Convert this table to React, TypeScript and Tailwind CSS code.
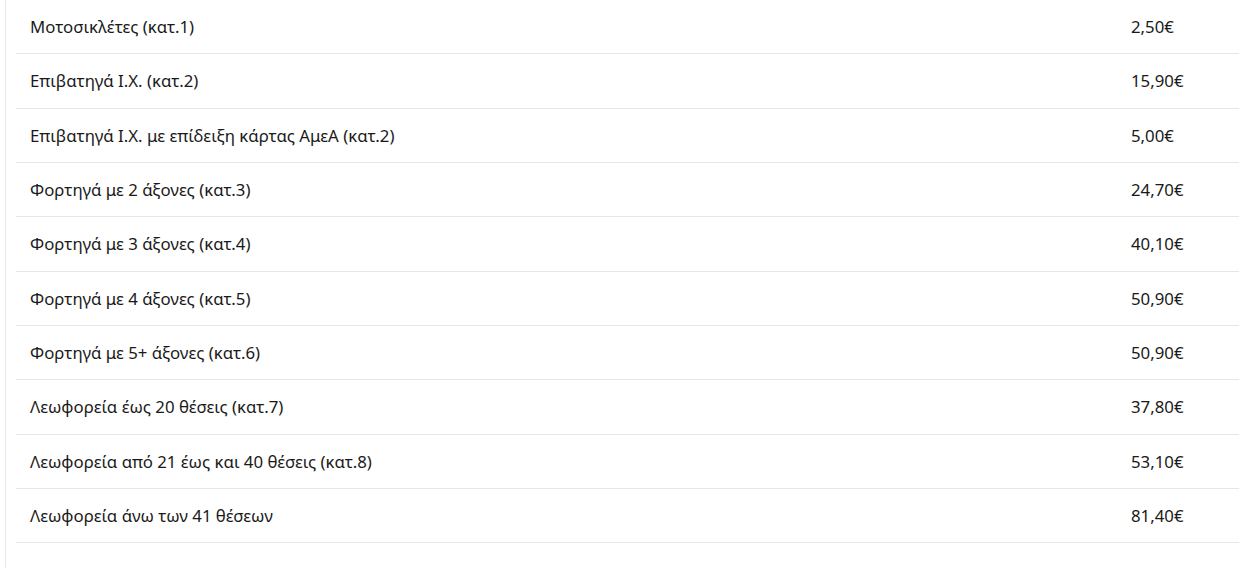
const rows: [string, string][] = [
  ["Μοτοσικλέτες (κατ.1)", "2,50€"],
  ["Επιβατηγά Ι.Χ. (κατ.2)", "15,90€"],
  ["Επιβατηγά Ι.Χ. με επίδειξη κάρτας ΑμεΑ (κατ.2)", "5,00€"],
  ["Φορτηγά με 2 άξονες (κατ.3)", "24,70€"],
  ["Φορτηγά με 3 άξονες (κατ.4)", "40,10€"],
  ["Φορτηγά με 4 άξονες (κατ.5)", "50,90€"],
  ["Φορτηγά με 5+ άξονες (κατ.6)", "50,90€"],
  ["Λεωφορεία έως 20 θέσεις (κατ.7)", "37,80€"],
  ["Λεωφορεία από 21 έως και 40 θέσεις (κατ.8)", "53,10€"],
  ["Λεωφορεία άνω των 41 θέσεων", "81,40€"],
];

export default function App() {
  return (
    <div className="min-h-[583px] bg-white pl-[5px] font-['Noto_Sans',sans-serif] text-[16.8px] text-[#1a1a1a]">
      <div className="border-l border-[#e6e6e6] pb-[25px] pl-[10px]">
        {rows.map(([name, price]) => (
          <div key={name} className="flex h-[54.33px] items-center border-b border-[#e6e6e6]">
            <div className="flex-1 pl-[14px]">{name}</div>
            <div className="w-[122px] pl-[14px]">{price}</div>
          </div>
        ))}
      </div>
    </div>
  );
}
